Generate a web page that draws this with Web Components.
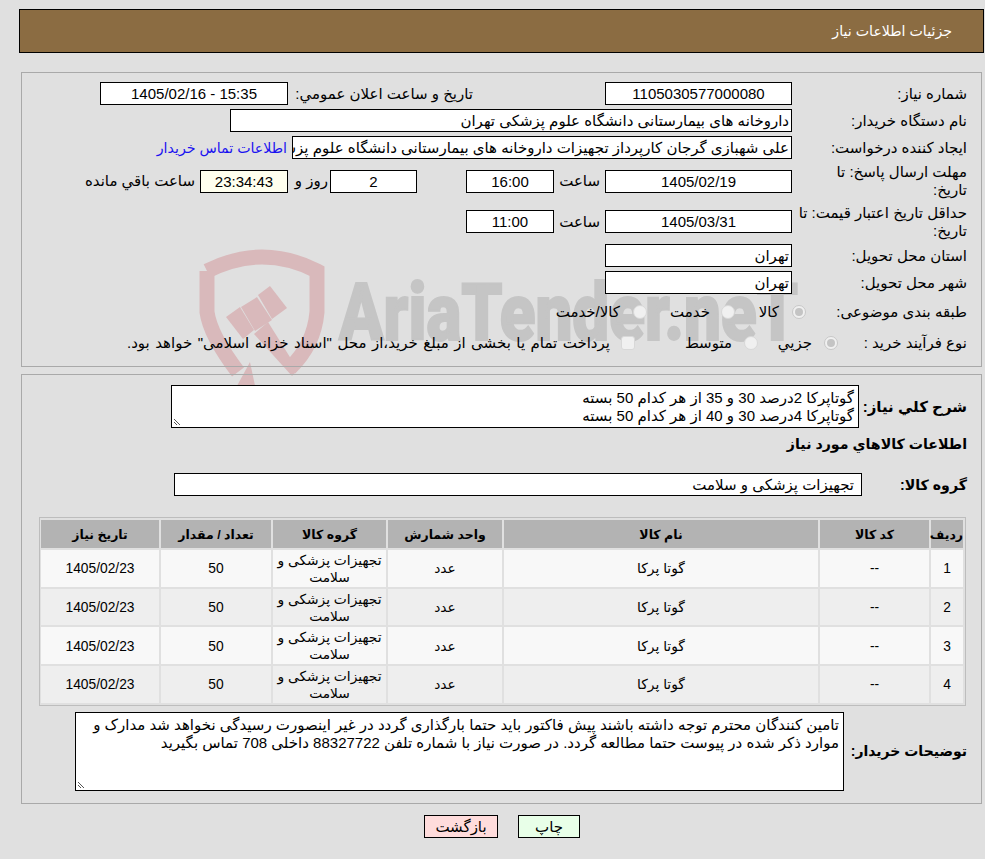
<!DOCTYPE html>
<html lang="fa" dir="rtl">
<head>
<meta charset="utf-8">
<title>جزئیات اطلاعات نیاز</title>
<style>
  html, body { margin: 0; padding: 0; background: #e0e0e0; }
  body {
    font-family: "Liberation Sans", "DejaVu Sans", sans-serif;
    font-size: 15px;
    color: #000;
    width: 985px;
    height: 859px;
    overflow: hidden;
    position: relative;
  }
</style>
</head>
<body>
<aria-watermark></aria-watermark>
<need-header>جزئیات اطلاعات نیاز</need-header>

<need-panel id="info">
  <form-row label="شماره نیاز:">
    <text-box style="width:187px">1105030577000080</text-box>
    <plain-text style="margin-inline-start:127px;width:180px">تاریخ و ساعت اعلان عمومي:</plain-text>
    <text-box style="width:188px">15:35 - 1405/02/16</text-box>
  </form-row>
  <form-row label="نام دستگاه خریدار:">
    <text-box start style="width:562px">داروخانه های بیمارستانی دانشگاه علوم پزشکی تهران</text-box>
  </form-row>
  <form-row label="ایجاد کننده درخواست:">
    <text-box start style="width:500px">علی شهبازی گرجان کارپرداز تجهیزات داروخانه های بیمارستانی دانشگاه علوم پزشکی تهران</text-box>
    <plain-text link>اطلاعات تماس خریدار</plain-text>
  </form-row>
  <form-row tall label="مهلت ارسال پاسخ: تا&#10;تاریخ:">
    <text-box style="width:187px">1405/02/19</text-box>
    <plain-text style="width:41px">ساعت</plain-text>
    <text-box style="width:88px">16:00</text-box>
    <text-box style="width:87px;margin-inline-start:44px">2</text-box>
    <plain-text style="width:35px;margin-inline-start:-3px">روز و</plain-text>
    <text-box warm style="width:88px">23:34:43</text-box>
    <plain-text>ساعت باقي مانده</plain-text>
  </form-row>
  <form-row tall style="height:37px" label="حداقل تاریخ اعتبار قیمت: تا&#10;تاریخ:">
    <text-box style="width:187px">1405/03/31</text-box>
    <plain-text style="width:41px">ساعت</plain-text>
    <text-box style="width:88px">11:00</text-box>
  </form-row>
  <form-row label="استان محل تحویل:">
    <text-box start style="width:187px">تهران</text-box>
  </form-row>
  <form-row label="شهر محل تحویل:">
    <text-box start style="width:187px">تهران</text-box>
  </form-row>
  <form-row choice style="--label:158px" label="طبقه بندی موضوعی:">
    <radio-dot checked></radio-dot>
    <plain-text style="width:19px;margin-inline-start:8px;margin-inline-end:20px">کالا</plain-text>
    <radio-dot></radio-dot>
    <plain-text style="width:39px;margin-inline-start:6px;margin-inline-end:19px">خدمت</plain-text>
    <radio-dot></radio-dot>
    <plain-text style="margin-inline-start:8px">کالا/خدمت</plain-text>
  </form-row>
  <form-row choice style="--label:126px;margin-top:-1px" label="نوع فرآیند خرید :">
    <radio-dot checked></radio-dot>
    <plain-text style="width:34px;margin-inline-start:7px;margin-inline-end:15px">جزيي</plain-text>
    <radio-dot></radio-dot>
    <plain-text style="width:46px;margin-inline-start:7px;margin-inline-end:46px">متوسط</plain-text>
    <radio-dot square></radio-dot>
    <plain-text style="margin-inline-start:6px;word-spacing:1.3px">پرداخت تمام یا بخشی از مبلغ خرید،از محل "اسناد خزانه اسلامی" خواهد بود.</plain-text>
  </form-row>
</need-panel>

<need-panel id="goods">
  <detail-row label="شرح کلي نیاز:" style="--box:688px;--box-h:43px">
    گوتاپرکا 2درصد 30 و 35 از هر کدام 50 بسته<br>گوتاپرکا 4درصد 30 و 40 از هر کدام 50 بسته
  </detail-row>
  <section-title>اطلاعات کالاهاي مورد نیاز</section-title>
  <group-row label="گروه کالا:">تجهیزات پزشکی و سلامت</group-row>
  <goods-table></goods-table>
  <detail-row label="توضیحات خریدار:" style="--box:769px;--box-h:79px;--gap:5px;--label:118px;--label-size:14px;margin-top:6px">
    تامین کنندگان محترم توجه داشته باشند پیش فاکتور باید حتما بارگذاری گردد در غیر اینصورت رسیدگی نخواهد شد مدارک و موارد ذکر شده در پیوست حتما مطالعه گردد. در صورت نیاز با شماره تلفن 88327722 داخلی 708 تماس بگیرید
  </detail-row>
</need-panel>

<button-bar>
  <page-button tone="green" style="width:62px">چاپ</page-button>
  <page-button tone="red" style="width:74px">بازگشت</page-button>
</button-bar>

<script>
// small helper, every element is just a template in an open shadow root
function makeElement(name, html, onCreate) {
  const template = document.createElement("template");
  template.innerHTML = html;
  class Item extends HTMLElement {
    constructor() {
      super();
      const shadow = this.attachShadow({ mode: "open" });
      shadow.appendChild(template.content.cloneNode(true));
    }
    connectedCallback() {
      if (onCreate) onCreate(this, this.shadowRoot);
    }
  }
  window.customElements.define(name, Item);
}

makeElement("need-header", `
  <style>
    :host {
      display: block;
      box-sizing: border-box;
      height: 44px;
      margin: 9px 1px 0 19px;
      padding: 0 31px 0 0;
      background: #8b6c42;
      border: 1px solid #000;
      color: #fff;
      font-size: 14.2px;
      line-height: 42px;
      position: relative;
    }
  </style>
  <slot></slot>`);

makeElement("need-panel", `
  <style>
    :host {
      display: block;
      box-sizing: border-box;
      margin: 0 3px 0 21px;
      border: 1px solid #a9a9a9;
      position: relative;
    }
    :host(#info) { margin-top: 19px; height: 295px; padding: 9px 14px 0 0; }
    :host(#goods) { margin-top: 7px; height: 430px; padding: 10px 14px 0 0; }
  </style>
  <slot></slot>`);

makeElement("form-row", `
  <style>
    :host {
      display: flex;
      align-items: center;
      height: 23px;
      margin-bottom: 4px;
    }
    :host([tall]) { height: 36px; }
    :host([choice]) { height: 28px; }
    .label {
      flex: none;
      box-sizing: border-box;
      width: var(--label, 172px);
      margin-inline-end: 3px;
      line-height: 18px;
      white-space: pre-line;
    }
    .fields { display: flex; align-items: center; gap: 5px; }
  </style>
  <div class="label"></div>
  <div class="fields"><slot></slot></div>`,
  (el, root) => { root.querySelector(".label").textContent = el.getAttribute("label"); });

makeElement("text-box", `
  <style>
    :host {
      display: block;
      flex: none;
      box-sizing: border-box;
      height: 23px;
      border: 1px solid #000;
      background: #fff;
      text-align: center;
      line-height: 21px;
      white-space: nowrap;
      overflow: hidden;
    }
    :host([start]) { text-align: right; padding: 0 2px; }
    :host([warm]) { background: #ffffee; }
  </style>
  <slot></slot>`);

makeElement("plain-text", `
  <style>
    :host { display: block; flex: none; white-space: nowrap; line-height: 18px; }
    :host([link]) { color: #1a12f0; font-size: 14.2px; }
  </style>
  <slot></slot>`);

makeElement("radio-dot", `
  <style>
    :host {
      display: block;
      flex: none;
      box-sizing: border-box;
      width: 14px;
      height: 14px;
      border: 1px solid #c8c8c8;
      border-radius: 50%;
      background: #f0f0f0;
      position: relative;
    }
    :host(:not([checked])) { border-color: #d8d8d8; }
    :host([square]) { border-radius: 3px; }
    :host([checked])::after {
      content: "";
      position: absolute;
      inset: 2px;
      border-radius: 50%;
      background: #c4c4c4;
    }
  </style>`);

makeElement("detail-row", `
  <style>
    :host { display: flex; align-items: center; }
    .label {
      flex: none;
      width: var(--label, 104px);
      margin-inline-end: var(--gap, 4px);
      font-weight: bold;
      font-size: var(--label-size, 15px);
      white-space: nowrap;
    }
    .box {
      box-sizing: border-box;
      width: var(--box);
      height: var(--box-h);
      border: 1px solid #000;
      background: #fff;
      padding: 3px 4px 0;
      line-height: 18px;
      position: relative;
      overflow: hidden;
    }
    svg { position: absolute; left: 1px; bottom: 1px; }
  </style>
  <div class="label"></div>
  <div class="box"><slot></slot>
    <svg width="10" height="10" viewBox="0 0 10 10" fill="none" stroke="#555" stroke-width="1">
      <path d="M1 3 L7 9 M1 6 L4 9"/>
    </svg>
  </div>`,
  (el, root) => { root.querySelector(".label").textContent = el.getAttribute("label"); });

makeElement("section-title", `
  <style>
    :host {
      display: block;
      margin-top: 6px;
      height: 20px;
      line-height: 20px;
      font-weight: bold;
      font-size: 14.2px;
    }
  </style>
  <slot></slot>`);

makeElement("group-row", `
  <style>
    :host { display: flex; align-items: center; margin-top: 19px; height: 23px; }
    .label { flex: none; width: 105px; font-weight: bold; font-size: 14.2px; }
    .box {
      box-sizing: border-box;
      width: 688px;
      height: 23px;
      border: 1px solid #000;
      background: #fff;
      padding: 0 7px;
      line-height: 21px;
    }
  </style>
  <div class="label"></div>
  <div class="box"><slot></slot></div>`,
  (el, root) => { root.querySelector(".label").textContent = el.getAttribute("label"); });

const heads = ["ردیف", "کد کالا", "نام کالا", "واحد شمارش", "گروه کالا", "تعداد / مقدار", "تاریخ نیاز"];
const widths = [32, 109, 314, 114, 113, 110, 118];

makeElement("goods-table", `
  <style>
    :host {
      display: block;
      box-sizing: border-box;
      width: 927px;
      margin: 21px 1px 0 0;
      border: 1px solid #bdbdbd;
    }
    table { border-collapse: separate; border-spacing: 2px; table-layout: fixed; width: 925px; }
    th {
      background: #b3b3b3;
      height: 28px;
      padding: 0;
      font-size: 12.5px;
      font-weight: bold;
    }
    td {
      box-sizing: border-box;
      height: 36.7px;
      padding: 1px 3px 0;
      text-align: center;
      line-height: 17px;
      font-size: 13.8px;
    }
    tr.odd td { background: #f8f8f8; }
    tr.even td { background: #eeeeee; }
  </style>
  <table><colgroup></colgroup><thead><tr></tr></thead><tbody></tbody></table>`,
  (el, root) => {
    const cols = root.querySelector("colgroup");
    const headRow = root.querySelector("thead tr");
    widths.forEach((w, i) => {
      const col = document.createElement("col");
      col.style.width = w + "px";
      cols.appendChild(col);
      const th = document.createElement("th");
      th.textContent = heads[i];
      headRow.appendChild(th);
    });
    const body = root.querySelector("tbody");
    for (let i = 1; i <= 4; i++) {
      const tr = document.createElement("tr");
      tr.className = i % 2 ? "odd" : "even";
      [i, "--", "گوتا پرکا", "عدد", "تجهیزات پزشکی و سلامت", "50", "1405/02/23"].forEach((v) => {
        const td = document.createElement("td");
        td.textContent = v;
        tr.appendChild(td);
      });
      body.appendChild(tr);
    }
  });

makeElement("button-bar", `
  <style>
    :host {
      display: flex;
      justify-content: center;
      gap: 20px;
      margin-top: 11px;
      padding-left: 19px;
    }
  </style>
  <slot></slot>`);

makeElement("page-button", `
  <style>
    :host {
      display: block;
      box-sizing: border-box;
      height: 23px;
      border: 1px solid #000;
      text-align: center;
      line-height: 21px;
    }
    :host([tone="green"]) { background: #e8ffe8; }
    :host([tone="red"]) { background: #ffdcdc; }
  </style>
  <slot></slot>`);

// site logo that lies behind the form
makeElement("aria-watermark", `
  <style>
    :host { position: absolute; left: 195px; top: 245px; width: 640px; height: 160px; }
    svg { display: block; }
    text { font-family: Roboto, sans-serif; font-weight: 900; }
  </style>
  <svg width="640" height="160" viewBox="195 245 640 160" direction="ltr">
    <g fill="none" stroke="#d9b9bb" stroke-width="15">
      <path d="M207 271 Q235 257 262 257 Q290 257 317 271 L317 312 Q314 345 290 368"/>
      <path d="M207 271 L207 312 Q210 335 238 372"/>
    </g>
    <g fill="#d9b9bb">
      <path d="M250 362 L257 395 L232 395 Z"/>
      <path d="M226 317 L240 307 L254 330 L243 339 Z"/>
      <path d="M241 307 L257 297 L272 320 L255 331 Z"/>
      <path d="M258 295 L270 286 L287 308 L272 319 Z"/>
      <path d="M254 334 L268 322 L298 370 L292 376 Z"/>
    </g>
    <text x="339" y="340" font-size="80" fill="#c5c5c5" stroke="#c5c5c5" stroke-width="2" textLength="459" lengthAdjust="spacingAndGlyphs">AriaTender.neT</text>
  </svg>`);
</script>
</body>
</html>
